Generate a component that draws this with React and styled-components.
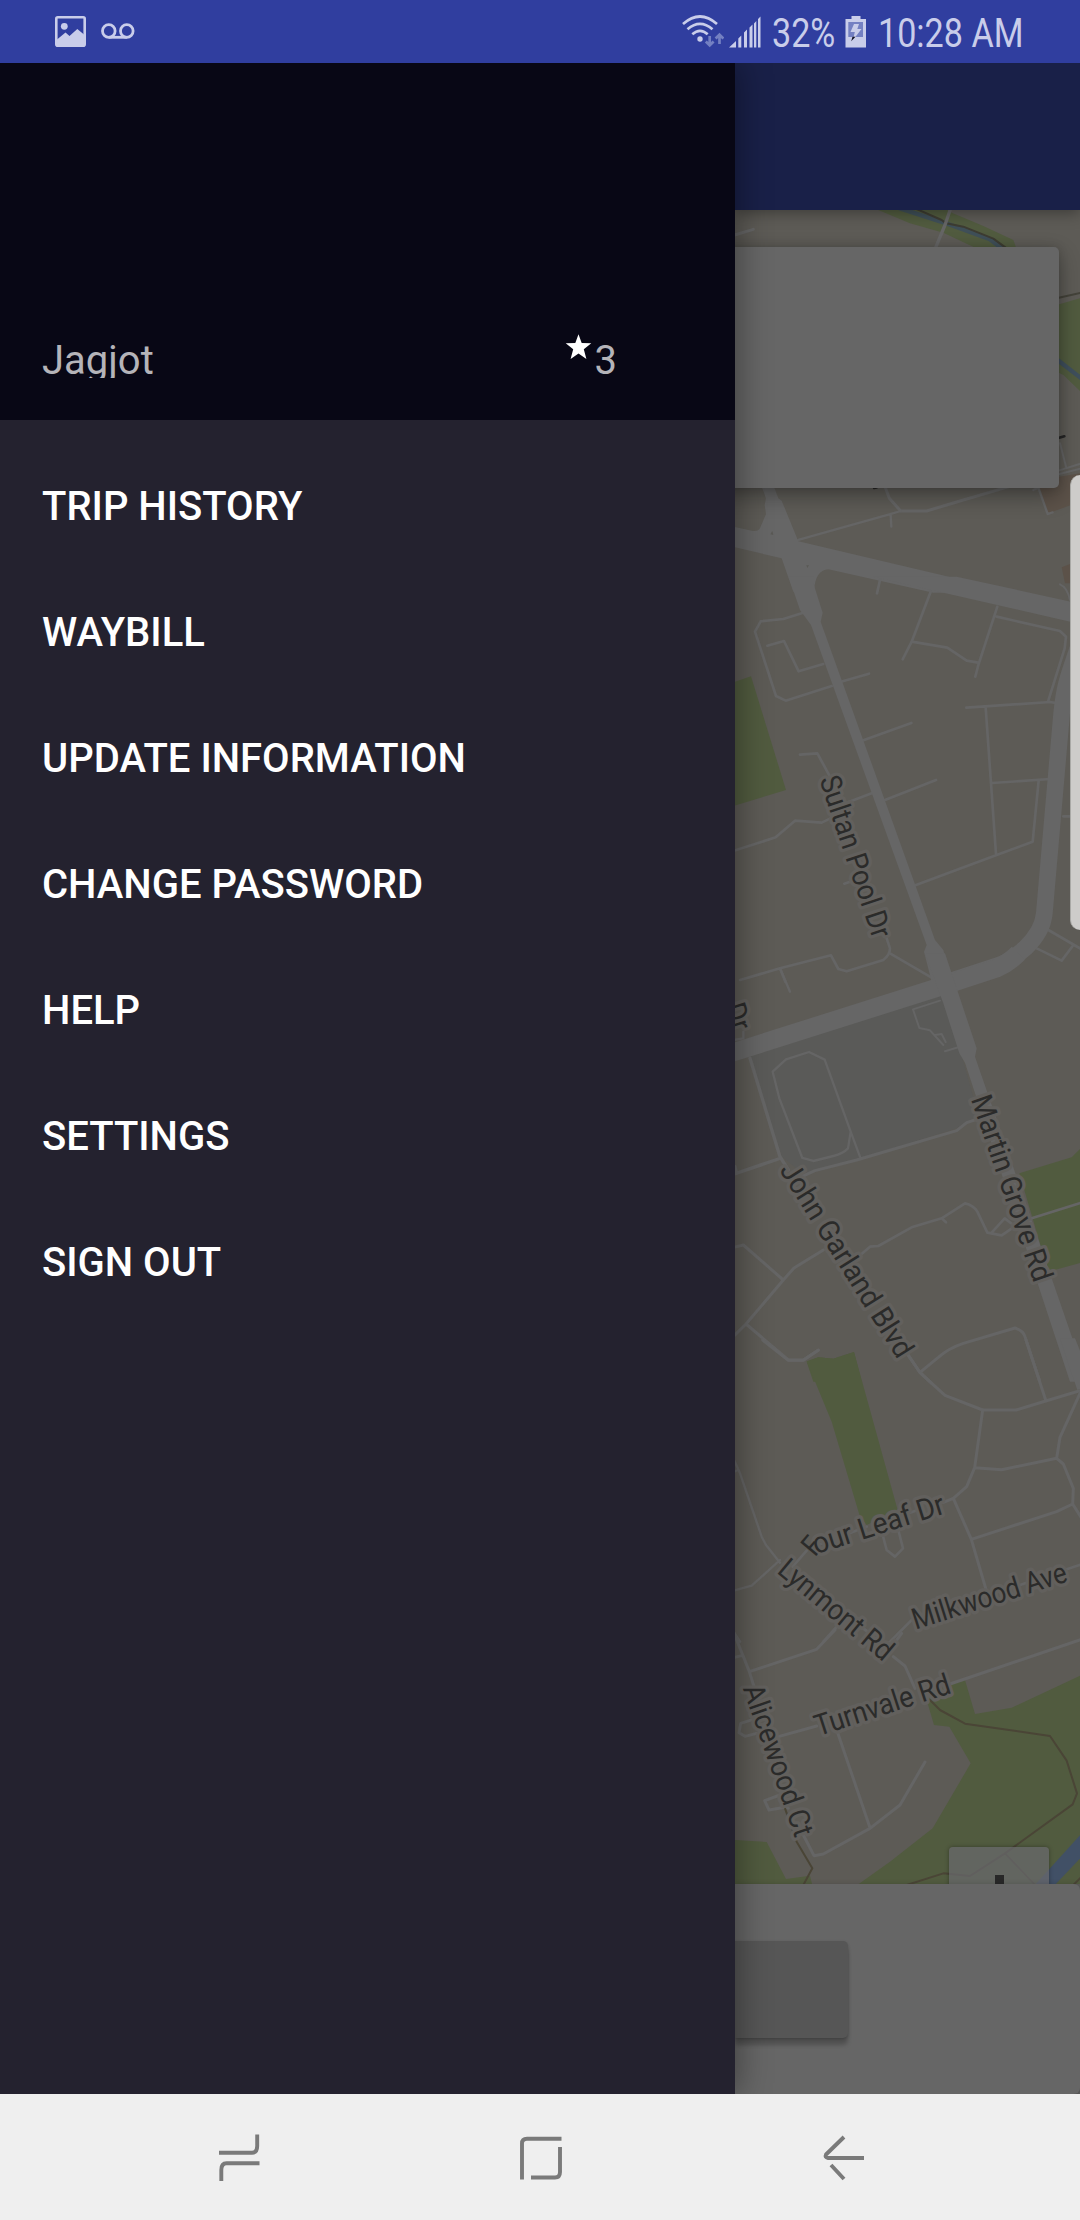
import React from "react";
import styled, { createGlobalStyle } from "styled-components";

const Global = createGlobalStyle`
  * { box-sizing: border-box; }
  body { margin: 0; background: #efefef; }
`;

const Screen = styled.div`
  display: flex;
  flex-direction: column;
  width: 1080px;
  height: 2220px;
  overflow: hidden;
  font-family: Roboto, "Noto Sans", sans-serif;
`;

const StatusBar = styled.header`
  display: flex;
  align-items: center;
  flex: 0 0 63px;
  height: 63px;
  padding: 0 55px;
  background: #303e9f;
  color: #c9cdea;
`;

const StatusGroup = styled.div`
  display: flex;
  align-items: center;
  gap: ${(p) => p.$gap}px;
  margin-left: ${(p) => (p.$end ? "auto" : 0)};
`;

const StatusText = styled.div`
  width: ${(p) => p.$width}px;
  height: 63px;
  padding-top: 4px;
  font-size: 40px;
  line-height: 60px;
  white-space: nowrap;
  span {
    display: inline-block;
    transform: scaleX(0.853);
    transform-origin: left center;
  }
`;

const Glyph = styled.svg`
  display: block;
  flex: none;
`;

const Body = styled.div`
  position: relative;
  display: flex;
  flex: 1;
  min-height: 0;
  overflow: hidden;
`;

const Drawer = styled.aside`
  position: relative;
  z-index: 2;
  display: flex;
  flex-direction: column;
  flex: 0 0 735px;
  background: #24222f;
  box-shadow: 4px 0 30px rgba(0, 0, 0, 0.36);
  clip-path: inset(0 -60px 0 0);
`;

const DrawerHeader = styled.div`
  display: flex;
  align-items: flex-end;
  height: 357px;
  padding: 0 118px 42px 42px;
  background: #080715;
  color: #b5b4b9;
  font-size: 40px;
`;

const Name = styled.div`
  height: 41px;
  line-height: 47px;
  overflow: hidden;
`;

const Rating = styled.div`
  display: flex;
  align-items: flex-start;
  gap: 3px;
  margin-left: auto;
  height: 44px;
  line-height: 53px;
`;

const Menu = styled.nav`
  display: flex;
  flex-direction: column;
  padding-top: 23px;
`;

const MenuItem = styled.a`
  display: flex;
  align-items: center;
  height: 126px;
  padding-left: 42px;
  color: #fff;
  font-size: 40px;
  font-weight: 500;
`;

const Content = styled.main`
  display: flex;
  flex-direction: column;
  flex: 1;
  min-width: 0;
  background: #5b5b5b;
`;

const AppBar = styled.div`
  position: relative;
  z-index: 1;
  flex: 0 0 147px;
  background: #192048;
  box-shadow: 0 3px 14px rgba(0, 0, 0, 0.35);
`;

const MapArea = styled.section`
  position: relative;
  flex: 1;
  min-height: 0;
  overflow: hidden;
`;

const MapCard = styled.div`
  position: absolute;
  top: 37px;
  left: -20px;
  width: 344px;
  height: 241px;
  border-radius: 5px;
  background: #666;
  box-shadow: 0 8px 22px rgba(0, 0, 0, 0.32), 0 0 10px rgba(0, 0, 0, 0.15);
`;

const ZoomControl = styled.div`
  position: absolute;
  top: 1637px;
  left: 214px;
  display: flex;
  justify-content: center;
  width: 100px;
  height: 100px;
  padding-top: 28px;
  border-radius: 4px;
  background: rgba(106, 106, 110, 0.72);
  box-shadow: 0 0 4px rgba(0, 0, 0, 0.35);
`;

const PlusStem = styled.div`
  width: 9px;
  height: 34px;
  background: #282828;
`;

const BottomPanel = styled.div`
  position: relative;
  flex: 0 0 210px;
  padding-top: 57px;
  border-radius: 0 6px 6px 0;
  background: #666;
  box-shadow: 0 0 5px rgba(0, 0, 0, 0.16);
`;

const PanelButton = styled.div`
  width: 113px;
  height: 97px;
  border-radius: 0 5px 5px 0;
  background: #565656;
  box-shadow: 0 7px 4px rgba(0, 0, 0, 0.22), 0 1px 3px rgba(0, 0, 0, 0.2);
`;

const EdgeHandle = styled.div`
  position: absolute;
  z-index: 3;
  top: 412px;
  right: 0;
  width: 10px;
  height: 455px;
  border-radius: 12px 0 0 12px;
  border-left: 1px solid #a9a9a6;
  background: #cdccca;
`;

const NavBar = styled.footer`
  display: flex;
  align-items: center;
  justify-content: center;
  gap: 260px;
  flex: 0 0 126px;
  padding-left: 2px;
  background: #efefef;
`;

const ITEMS = [
  "TRIP HISTORY",
  "WAYBILL",
  "UPDATE INFORMATION",
  "CHANGE PASSWORD",
  "HELP",
  "SETTINGS",
  "SIGN OUT",
];

const LABELS = [
  ["Sultan Pool Dr", 819.3, 779.5, 71.5, 169],
  ["Dr", 724.3, 1006.5, 72, 27],
  ["Martin Grove Rd", 970.7, 1099, 71.1, 195],
  ["John Garland Blvd", 779, 1170, 58, 224],
  ["our Leaf Dr", 816, 1554.3, -17.6, 137],
  ["F", 815, 1557.5, -50, 14],
  ["Lynmont Rd", 776, 1572.3, 39.9, 140],
  ["Milkwood Ave", 915.5, 1629.7, -17.6, 161],
  ["Turnvale Rd", 818.3, 1736.3, -18, 141],
  ["Alicewood Ct", 742.7, 1688.5, 70.7, 159],
];

const Sector = ({ y, children }) => (
  <g transform={`translate(730 ${y}) scale(0.33333)`} fill="none" strokeLinejoin="round">
    {children}
  </g>
);

const Line = ({ d, w = 8, c = "#656565" }) => (
  <path d={d} stroke={c} strokeWidth={w} strokeLinecap="round" />
);

const GREEN = "#515b3f";
const TRAIL = "#4a4536";
const BUILDING = "#5c5249";

const StreetMap = () => (
  <Glyph width="345" height="1674" viewBox="735 210 345 1674">
    <rect x="735" y="210" width="345" height="1674" fill="#5d5b56" />

    <Sector y={190}>
      <path d="M440 58 L540 100 L640 128 L745 178 L860 178 L850 150 L760 108 L660 66 L640 50 Z" fill={GREEN} />
      <Line d="M510 55 L640 97 L780 148 L815 175" w={13} c="#3f4f58" />
      <Line d="M555 55 L635 90 L648 100 L700 110 L790 146 L830 175" w={6} c="#3d3c32" />
      <Line d="M662 55 L645 105 L612 185" w={10} />
      <Line d="M10 136 L70 118" w={9} />
      <path d="M980 345 L1050 325 V603 L1000 555 L980 545 Z" fill={GREEN} />
      <Line d="M980 508 L1055 566" w={13} c="#3f4f5c" />
      <Line d="M980 325 L1055 308" w={6} c="#44433a" />
      <path d="M925 895 L980 862 L1050 850 V935 L955 970 Z" fill={BUILDING} />
      <path d="M995 1132 L1020 1122 V1180 L1005 1180 Z" fill={BUILDING} />
      <Line d="M985 744 L1003 739" w={8} c="#262626" />
      <Line d="M432 894 L440 893" w={7} c="#262626" />
      <Line d="M990 760 L1008 830 M985 842 L1055 820 M985 853 L1055 835" w={6} />
      <Line d="M910 900 L925 893 L953 972 L968 967" w={7} />
      <Line d="M465 890 L478 925 L512 963 H590 L700 930 L850 886" w={9} />
      <Line d="M205 1050 L478 973 L512 963 M482 975 L484 1010" w={7} />
      <path d="M95 890 L108 925 L104 945 L108 972 L90 1015 Q85 1025 65 1022 L0 1008 V1068 L155 1105 L190 1205 H252 Q255 1140 295 1138 L610 1208 H860 L205 1054 L155 932 L145 925 L132 890 Z" fill="#666" />
      <path d="M121 1033 L127 1023 L130 1035 Z M229 1126 H237 L232 1134 Z" fill="#5a5955" />
    </Sector>

    <Sector y={580}>
      <path d="M10 307 L63 289 L168 630 L10 678 Z" fill={GREEN} />
      <Line d="M215 100 L160 117 L92 124 L75 155 L138 348 L167 362 L305 318 M330 306 L417 281" />
      <Line d="M112 197 L162 183 L206 274 L280 252" />
      <Line d="M450 0 L441 40 M602 35 L545 185 L518 238 M545 185 L652 203 L710 242 L745 248" />
      <Line d="M802 80 L745 255 L736 290 M800 110 L990 153 L1008 170 L1004 205 L955 362" />
      <Line d="M990 13 Q1012 22 1020 60" w={6} />
      <Line d="M709 383 L960 366 L985 370 M767 383 L798 822 M787 609 L960 597 M926 602 L908 785 L800 825 L556 916" />
      <Line d="M400 481 L544 429 M465 660 L618 600 M210 524 L262 520 L300 590 M425 640 L350 668 M300 716 L275 728 L195 722 L137 772 L10 813" />
      <Line d="M343 911 L360 905 M470 1075 L480 1105 Q480 1125 460 1140 L350 1174 L325 1167 L303 1126 L150 1165 L30 1200 M150 1165 L166 1205 M480 1120 L610 1196" />
      <Line d="M955 1050 L1055 1108 M920 1105 L995 1142 L1028 1098" />
      <Line d="M1000 709 H1050" />
      <path d="M430 -10 L1055 133 V72 L680 -10 Z" fill="#666" />
      <path d="M176 -10 L210 90 L243 135 L590 1095 L582 1115 L605 1205 H665 L640 1110 L615 1080 L272 125 L278 98 L250 10 V-10 Z" fill="#666" />
      <path d="M1055 170 C1020 280 1005 300 995 400 L943 1000 Q938 1055 885 1105 Q840 1145 800 1158 L640 1210" stroke="#666" strokeWidth="50" />
    </Sector>

    <Sector y={960}>
      <path d="M60 290 L640 90 L745 465 L680 505 L380 600 L225 645 L155 590 Z" fill="#5a5a58" />
      <path d="M868 640 L1025 592 L1055 562 V908 L955 935 Z" fill={GREEN} />
      <path d="M230 1205 L265 1192 L310 1196 L372 1176 L395 1265 H250 Z" fill={GREEN} />
      <Line d="M150 25 L180 95 M10 240 L40 235 V215" w={7} />
      <Line d="M60 295 L150 590 L175 630 M10 643 L145 597 M15 620 L20 640" w={10} />
      <Line d="M128 335 L168 298 L237 276 L284 299 L362 515 L354 565 Q340 580 310 588 L250 603 L217 594 L148 415 Z M362 515 L392 596" w={7} />
      <Line d="M215 650 L255 632 L380 600 L680 512 L710 488 L740 478" w={9} />
      <Line d="M630 122 L549 148 L568 204 L600 211 L640 255 M615 225 L635 222 L647 246 M645 274 L685 262" w={6} />
      <Line d="M385 890 L420 860 L445 858 L545 802 L635 775 L705 730 Q730 735 742 755 L772 818 L815 826 L850 802 M785 818 L824 775 L850 795 M635 775 L648 787" w={8} />
      <Line d="M280 870 L192 924 L160 960 L48 1092 L10 1130 M160 960 L40 855 L10 862 M48 1092 L175 1200 H220 L265 1170" w={9} />
      <Line d="M905 775 L1055 728" w={8} />
      <Line d="M530 1180 L570 1237 L605 1270 M570 1237 L625 1192 Q655 1165 700 1150 L855 1104 Q880 1112 885 1130 L928 1260" w={9} />
      <path d="M0 280 L640 77 L800 25 Q835 10 865 -20" stroke="#666" strokeWidth="55" />
      <path d="M585 -20 L640 130 L688 280 L705 308 L1020 1265 H1055 V1215 L735 290 L740 265 L645 -20 Z" fill="#666" />
    </Sector>

    <Sector y={1340}>
      <path d="M230 64 L265 52 L310 56 L372 36 L503 510 L410 555 L390 530 L305 245 Z" fill={GREEN} />
      <path d="M990 -5 L1042 150 L1055 145 V45 L1035 -5 Z" fill="#666" />
      <Line d="M98 0 L175 61 H220 L265 31" w={9} />
      <Line d="M535 45 L570 98 L645 166 L758 210 H858 L947 183 L1050 152 M888 0 L947 180" w={9} />
      <Line d="M758 210 L734 383 L710 440 L670 475 L640 487 M734 383 L815 389 L980 355 M1050 160 L990 292 L980 355 L1000 372 L1030 445 L1028 492 L980 515 L724 598 M1028 492 L1055 535 M670 475 L724 598 L770 755" w={9} />
      <Line d="M10 355 L30 400 L95 590 L108 615 L150 668 M10 395 L20 392 M150 660 L65 737 L10 752" w={7} />
      <Line d="M188 680 L230 632 M250 620 L410 560 M540 518 L570 508 M458 585 L470 630 L495 650 L519 625 L505 570" w={8} />
      <Line d="M870 735 L890 728 M1010 688 L1055 673 M545 840 L475 910 M325 855 L280 905 M10 875 L30 905" w={8} />
    </Sector>

    <Sector y={1630}>
      <path d="M590 210 L612 285 L658 290 L722 400 L608 595 L480 695 L375 770 H1055 V135 L845 233 L735 252 L705 150 L640 170 Z" fill={GREEN} />
      <path d="M10 630 L110 636 L168 747 L240 737 L248 770 H10 Z" fill={GREEN} />
      <path d="M910 770 L1055 610 V680 L970 770 Z" fill="#415066" />
      <Line d="M600 210 L630 240 L705 281 L960 318 L1010 392 L1041 490 L1028 523 L825 670 L720 738 L640 730 L530 765 M1030 765 L1055 740" w={6} c={TRAIL} />
      <Line d="M825 670 L920 770" w={5} c={TRAIL} />
      <Line d="M10 5 L58 125 L72 170 M58 125 L260 58 L315 0 M10 83 L35 77 M500 30 L515 10" w={9} />
      <Line d="M490 80 L525 108 L555 175 M400 -5 L425 15 M660 162 L1055 28" w={9} />
      <Line d="M70 268 L32 280 L27 308 L45 319 L80 310 M145 320 L260 288 M322 305 L420 593 M585 396 L510 525 L420 595 L280 672 L252 677 L220 615" w={9} />
      <Line d="M150 495 L104 512 L117 540 L165 532 L175 535" w={9} />
      <Line d="M165 535 L200 635 L247 715 L220 765" w={6} c={TRAIL} />
    </Sector>

    <g fill="#2b2b2a" stroke="#62605d" strokeLinejoin="round" paintOrder="stroke" fontFamily="Roboto, sans-serif" fontSize="29.5">
      {LABELS.map(([text, x, y, angle, length]) => (
        <text
          key={text + y}
          transform={`translate(${x} ${y}) rotate(${angle})`}
          textLength={length}
          lengthAdjust="spacingAndGlyphs"
          strokeWidth={text === "F" ? 0 : 7}
        >
          {text}
        </text>
      ))}
    </g>
  </Glyph>
);

const PictureIcon = () => (
  <Glyph width="31" height="31" viewBox="0 0 31 31">
    <rect x="1.3" y="1.3" width="28.4" height="28.4" rx="1.5" fill="none" stroke="currentColor" strokeWidth="2.6" />
    <circle cx="9.3" cy="10.3" r="3.4" fill="currentColor" />
    <path d="M2 23.5 L10.5 16.5 L14.5 20 L22.3 13 L29 18.5 V29 H2 Z" fill="currentColor" />
  </Glyph>
);

const VoicemailIcon = () => (
  <Glyph width="34" height="18" viewBox="0 0 34 18">
    <g fill="none" stroke="currentColor" strokeWidth="2.8">
      <circle cx="7.8" cy="8" r="6.3" />
      <circle cx="25.8" cy="8" r="6.3" />
      <path d="M7.8 14.3 H25.8" />
    </g>
  </Glyph>
);

const WifiIcon = () => (
  <Glyph width="42" height="33" viewBox="0 0 42 33">
    <g fill="none" stroke="currentColor" strokeWidth="2.7">
      <path d="M1 9 Q18 -6 35 9" />
      <path d="M5.5 14.3 Q18 3.5 30.5 14.3" />
      <path d="M10.3 19.3 Q18 12.5 25.7 19.3" />
    </g>
    <circle cx="18" cy="24" r="2.7" fill="currentColor" />
    <g fill="none" stroke="#7480c2" strokeWidth="2.7">
      <path d="M27.7 21 V30 M23.8 26.5 L27.7 30.3 L31.6 26.5" />
      <path d="M37.5 29 V20 M33.6 23.5 L37.5 19.7 L41.4 23.5" />
    </g>
  </Glyph>
);

const SignalIcon = () => (
  <Glyph width="32" height="32" viewBox="0 0 32 32" fill="currentColor">
    <path d="M0 31.5 L7 25 V31.5 Z M9.3 22.5 L12.3 19.5 V31.5 H9.3 Z M15 16.5 L18 13.5 V31.5 H15 Z M20.5 11.5 L23.5 8.5 V31.5 H20.5 Z M25 7.5 L27.3 5 V31.5 H25 Z M29 3 L31.5 0.5 V31.5 H29 Z" />
  </Glyph>
);

const BatteryIcon = () => (
  <Glyph width="22" height="32" viewBox="0 0 22 32">
    <path d="M6.5 0 H15.5 V3 H21 V31.5 H0.5 V3 H6.5 Z" fill="currentColor" />
    <rect x="3.3" y="6" width="14.7" height="15" fill="#7480c2" />
    <path d="M9 8 H14 L12.3 13 H16.5 L8 24 L9.8 16 H5.5 Z" fill="currentColor" />
    <path d="M10.5 20.8 L6.2 25.3 L7.5 20.8 Z" fill="#111122" />
  </Glyph>
);

const StarIcon = () => (
  <Glyph width="27" height="26" viewBox="0 0 27 26">
    <path d="M13.5 0.3 L16.7 9 L26.3 9.3 L18.8 15.2 L21.4 25 L13.5 19.6 L5.6 25 L8.2 15.2 L0.7 9.3 L10.3 9 Z" fill="#fff" />
  </Glyph>
);

const NavIcon = ({ d }) => (
  <Glyph width="42" height="50" viewBox="0 0 42 50">
    <path d={d} fill="none" stroke="#7a7a7a" strokeWidth="3.9" />
  </Glyph>
);

export default function App() {
  return (
    <Screen>
      <Global />
      <StatusBar>
        <StatusGroup $gap={15}>
          <PictureIcon />
          <VoicemailIcon />
        </StatusGroup>
        <StatusGroup $gap={11} $end>
          <StatusGroup $gap={5}>
            <WifiIcon />
            <SignalIcon />
          </StatusGroup>
          <StatusText $width={62}>
            <span>32%</span>
          </StatusText>
          <BatteryIcon />
          <StatusText $width={147}>
            <span>10:28 AM</span>
          </StatusText>
        </StatusGroup>
      </StatusBar>

      <Body>
        <Drawer>
          <DrawerHeader>
            <Name>Jagjot</Name>
            <Rating>
              <StarIcon />
              <span>3</span>
            </Rating>
          </DrawerHeader>
          <Menu>
            {ITEMS.map((label) => (
              <MenuItem key={label}>{label}</MenuItem>
            ))}
          </Menu>
        </Drawer>

        <Content>
          <AppBar />
          <MapArea>
            <StreetMap />
            <ZoomControl>
              <PlusStem />
            </ZoomControl>
            <MapCard />
          </MapArea>
          <BottomPanel>
            <PanelButton />
          </BottomPanel>
        </Content>
        <EdgeHandle />
      </Body>

      <NavBar>
        <NavIcon d="M1 20.7 H34 Q39.2 20.7 39.2 14 V2.5 M3.3 49 V38 Q3.3 31.3 8.5 31.3 H41.5" />
        <NavIcon d="M2 47.5 V11.5 Q2 6.7 7 6.7 H41.5 M40 15 V40 Q40 45.5 35 45.5 H11" />
        <NavIcon d="M42 26 H6 Q2.5 25.5 4 22.5 L22 5 M9 33 L22 47" />
      </NavBar>
    </Screen>
  );
}
